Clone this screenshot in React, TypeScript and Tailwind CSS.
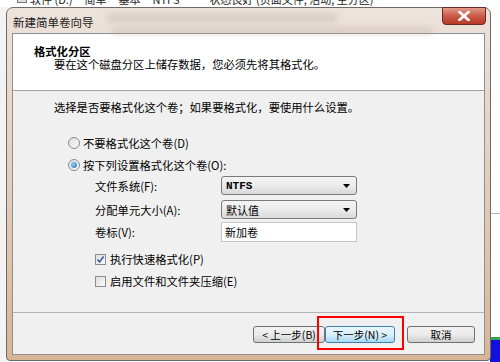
import React from "react";

const F = "font-['Noto_Sans_CJK_SC','Liberation_Sans',sans-serif]";

function Radio({ checked }: { checked?: boolean }) {
  return (
    <span className="w-[12px] h-[12px] rounded-full border border-[#8a8c8e] bg-linear-to-br from-[#dcdcdc] to-[#fbfbfb] flex items-center justify-center shrink-0">
      {checked && <span className="w-[6px] h-[6px] rounded-full bg-[radial-gradient(circle_at_35%_35%,#8fd0ff,#1a72c9)]" />}
    </span>
  );
}

function Check({ checked }: { checked?: boolean }) {
  return (
    <span className="w-[11px] h-[11px] border border-[#8a8c8e] bg-linear-to-br from-[#dedede] to-[#fbfbfb] flex items-center justify-center shrink-0">
      {checked && (
        <svg width="9" height="9" viewBox="0 0 9 9">
          <path d="M1.5 4.5 L3.6 7 L7.6 1.5" fill="none" stroke="#3f5b9a" strokeWidth="1.6" />
        </svg>
      )}
    </span>
  );
}

function Combo({ value, mono }: { value: string; mono?: boolean }) {
  return (
    <div className="w-[136px] h-[19px] rounded-[3px] border border-[#7a7a7a] bg-linear-to-b from-[#f4f4f4] via-[#ebebeb] to-[#d9d9d9] flex items-center pl-[4px] pr-[6px]">
      <span className={`flex-1 text-[11px] ${mono ? "font-['Liberation_Mono'] font-bold text-[10px]" : ""}`}>{value}</span>
      <svg width="7" height="4" viewBox="0 0 7 4">
        <path d="M0 0 H7 L3.5 4 Z" fill="#000" />
      </svg>
    </div>
  );
}

function Btn({ children, w, active }: { children: React.ReactNode; w: string; active?: boolean }) {
  return (
    <div
      className={`${w} h-[17px] rounded-[3px] border flex items-center justify-center text-[10.5px] leading-[12px] whitespace-nowrap ${
        active
          ? "border-[#3c7fb1] bg-linear-to-b from-[#eaf6fd] via-[#d9f0fc] to-[#a7d9f5]"
          : "border-[#707070] bg-linear-to-b from-[#f2f2f2] via-[#ebebeb] to-[#cfcfcf]"
      }`}
    >
      {children}
    </div>
  );
}

export default function App() {
  return (
    <div className={`w-[500px] h-[362px] relative overflow-hidden bg-white text-black ${F}`}>
      {/* desktop behind: partially visible disk list row */}
      <div className="h-[7px] overflow-hidden bg-white">
        <div className="mt-[-8px] h-[14px] flex items-center text-[11px] text-[#222] leading-[14px]">
          <span className="ml-[17px] w-[10px] h-[8px] border border-[#777] bg-[#ddd]" />
          <span className="ml-[3px]">软件 (D:)</span>
          <span className="ml-[12px]">简单</span>
          <span className="ml-[12px]">基本</span>
          <span className="ml-[12px]">NTFS</span>
          <span className="ml-[30px]">状态良好 (页面文件, 活动, 主分区)</span>
        </div>
      </div>
      <div className="absolute left-0 top-[7px] w-[8px] h-[355px] bg-[#f3f3f3]" />
      <div className="absolute right-0 top-[213px] w-[10px] h-[1px] bg-[#b8b8b8]" />
      <div className="absolute right-0 top-[337px] w-[10px] h-[3px] bg-[#2fa84a]" />
      <div className="absolute right-0 top-[340px] w-[10px] h-[22px] bg-[#1010e0]" />

      {/* wizard window */}
      <div className="absolute left-[6px] top-[7px] w-[485px] h-[354px] rounded-t-[7px] rounded-b-[4px] border border-[#6f6a66] bg-linear-to-b from-[#ece3dc] via-[#e3cdbb] to-[#d8b596] flex flex-col px-[5px] pb-[5px]">
        <div className="h-[25px] flex items-start relative">
          <div className="absolute left-[95px] top-[6px] w-[230px] h-[8px] bg-[#b9aaa0] opacity-40 blur-[3px]" />
          <div className="absolute left-[100px] top-[20px] w-[320px] h-[6px] bg-[#b5a79c] opacity-40 blur-[3px]" />
          <span className="relative mt-[7px] ml-[1px] text-[11.5px] leading-[14px] text-[#1a1a1a]">新建简单卷向导</span>
          <div className="ml-auto mr-[-1px] mt-[-1px] w-[44px] h-[18px] rounded-b-[4px] border border-[#6b2a22] bg-linear-to-b from-[#e39a8a] via-[#c95a48] to-[#b83a26] flex items-center justify-center relative">
            <svg width="12" height="10" viewBox="0 0 12 10">
              <path d="M1.5 1 L10.5 9 M10.5 1 L1.5 9" stroke="#fff" strokeWidth="2.6" strokeLinecap="square" />
            </svg>
          </div>
        </div>

        <div className="flex-1 border border-[#8e8e8e] bg-[#f0f0f0] flex flex-col">
          {/* header */}
          <div className="h-[57px] bg-white border-b border-[#a0a0a0] pl-[21px] pt-[11px] text-[11.3px] leading-[13px]">
            <div className="font-bold">格式化分区</div>
            <div className="pl-[20px]">要在这个磁盘分区上储存数据，您必须先将其格式化。</div>
          </div>

          {/* body */}
          <div className="h-[222px] border-b border-[#b4b4b4] pl-[41px] text-[11.3px] leading-[14px]">
            <div className="mt-[9px] h-[14px]">选择是否要格式化这个卷；如果要格式化，要使用什么设置。</div>
            <div className="mt-[22px] h-[14px] pl-[14px] flex items-center gap-[3px]">
              <Radio />
              <span>不要格式化这个卷(D)</span>
            </div>
            <div className="mt-[8px] h-[14px] pl-[14px] flex items-center gap-[3px]">
              <Radio checked />
              <span>按下列设置格式化这个卷(O):</span>
            </div>
            <div className="mt-[4px] h-[19px] pl-[41px] flex items-center">
              <span className="w-[126px]">文件系统(F):</span>
              <Combo value="NTFS" mono />
            </div>
            <div className="mt-[5px] h-[19px] pl-[41px] flex items-center">
              <span className="w-[126px]">分配单元大小(A):</span>
              <Combo value="默认值" />
            </div>
            <div className="mt-[3px] h-[20px] pl-[41px] flex items-center">
              <span className="w-[126px]">卷标(V):</span>
              <div className="w-[136px] h-[20px] border border-[#c4c6cc] bg-white flex items-center pl-[3px] text-[11px]">新加卷</div>
            </div>
            <div className="mt-[10px] h-[14px] pl-[41px] flex items-center gap-[4px]">
              <Check checked />
              <span>执行快速格式化(P)</span>
            </div>
            <div className="mt-[8px] h-[14px] pl-[41px] flex items-center gap-[4px]">
              <Check />
              <span>启用文件和文件夹压缩(E)</span>
            </div>
          </div>

          {/* buttons */}
          <div className="flex-1 relative">
            <div className="mt-[13px] flex pl-[240px]">
              <Btn w="w-[72px]">&lt; 上一步(B)</Btn>
              <Btn w="w-[70px]" active>下一步(N) &gt;</Btn>
              <div className="w-[12px]" />
              <Btn w="w-[68px]">取消</Btn>
            </div>
            <div className="absolute left-[304px] top-[3px] w-[87px] h-[34px] border-2 border-[#ff0000]" />
          </div>
        </div>
      </div>
    </div>
  );
}
